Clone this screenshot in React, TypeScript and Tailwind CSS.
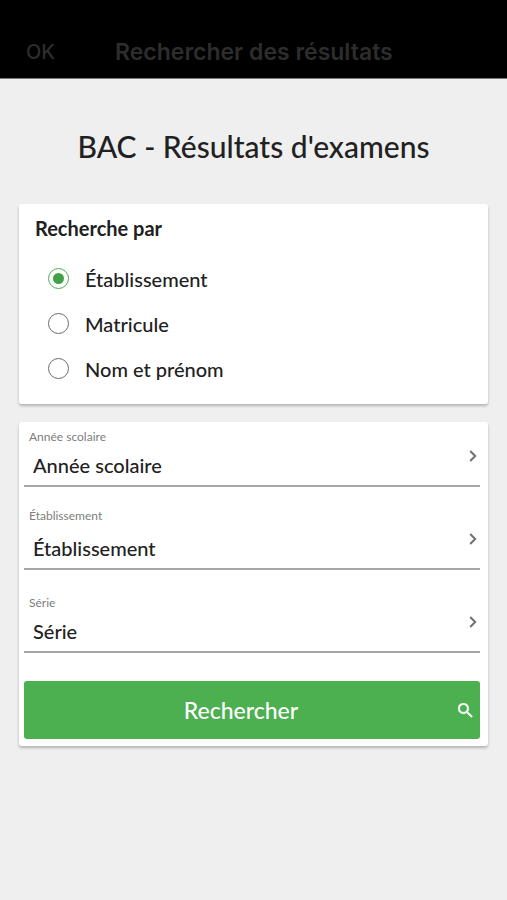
import { useState } from "react";

const searchModes = ["Établissement", "Matricule", "Nom et prénom"];

function Chevron() {
  return (
    <svg viewBox="0 0 8 12" className="h-3 w-2" fill="none" stroke="#707070" strokeWidth="2" aria-hidden="true">
      <path d="M1.2 1 6.2 6 1.2 11" />
    </svg>
  );
}

interface PickerProps {
  id: string;
  label: string;
  className: string;
}

function Picker({ id, label, className }: PickerProps) {
  return (
    <div className={`relative flex flex-col justify-between border-b-2 border-[#a6a6a6] ${className}`}>
      <label htmlFor={id} className="px-[5px] text-[12px] leading-4 text-[#7d7d7d]">
        {label}
      </label>
      <select
        id={id}
        className="h-10 w-full appearance-none bg-transparent pr-8 pl-[9px] text-[20px] font-medium text-[#212121] outline-none"
      >
        <option>{label}</option>
      </select>
      <span className="pointer-events-none absolute right-[3px] bottom-[23px]">
        <Chevron />
      </span>
    </div>
  );
}

export default function App() {
  const [mode, setMode] = useState(searchModes[0]);

  return (
    <div className="min-h-screen bg-[#efefef] font-['Lato','Liberation_Sans',sans-serif] text-[#212121]">
      <header className="flex h-[79px] items-end border-b border-[#777] bg-black px-[26px] pb-3 font-['Inter','Liberation_Sans',sans-serif] text-[#2d2d2d]">
        <button type="button" className="w-[89px] text-left text-[20px] leading-7 font-medium">
          OK
        </button>
        <h2 className="text-[23px] leading-7 font-semibold whitespace-nowrap">Rechercher des résultats</h2>
      </header>

      <main className="px-[19px]">
        <h1 className="pt-[47px] pb-[38px] text-center text-[30px] leading-10 font-medium whitespace-nowrap">
          BAC - Résultats d'examens
        </h1>

        <form onSubmit={(event) => event.preventDefault()}>
          <fieldset className="rounded-[3px] bg-white px-4 pt-3 pb-[13px] shadow-[0_2px_3px_rgba(0,0,0,0.25)]">
            <legend className="float-left w-full text-[20px] leading-6 font-bold">Recherche par</legend>
            <div className="clear-both flex flex-col pt-4">
              {searchModes.map((name) => (
                <label key={name} className="flex h-[45px] items-center gap-4 pl-[13px] text-[20px] leading-6 font-medium">
                  <input
                    type="radio"
                    name="mode"
                    checked={mode === name}
                    onChange={() => setMode(name)}
                    className="grid size-[21px] appearance-none place-content-center rounded-full border border-[#6b6b6b] before:size-[11px] before:rounded-full checked:border-[#4caf50] checked:before:bg-[#43a047]"
                  />
                  {name}
                </label>
              ))}
            </div>
          </fieldset>

          <section className="mt-[18px] rounded-[3px] bg-white pt-[7px] pr-2 pb-[7px] pl-[5px] shadow-[0_2px_3px_rgba(0,0,0,0.25)]">
            <Picker id="annee" label="Année scolaire" className="h-[58px]" />
            <Picker id="etablissement" label="Établissement" className="mt-[21px] h-[62px]" />
            <Picker id="serie" label="Série" className="mt-[25px] h-[58px]" />
            <button
              type="submit"
              className="mt-7 flex h-[58px] w-full items-center rounded-[3px] bg-[#4caf50] pr-[7px] text-[23px] leading-7 font-medium text-white"
            >
              <span className="flex-1 text-center">Rechercher</span>
              <svg viewBox="3 3 18 18" className="size-[15px]" fill="currentColor" stroke="currentColor" strokeWidth="0.5" aria-hidden="true">
                <path d="M15.5 14h-.79l-.28-.27A6.47 6.47 0 0 0 16 9.5 6.5 6.5 0 1 0 9.5 16c1.61 0 3.09-.59 4.23-1.57l.27.28v.79l5 4.99L20.49 19l-4.99-5zm-6 0C7.01 14 5 11.99 5 9.5S7.01 5 9.5 5 14 7.01 14 9.5 11.99 14 9.5 14z" />
              </svg>
            </button>
          </section>
        </form>
      </main>
    </div>
  );
}
